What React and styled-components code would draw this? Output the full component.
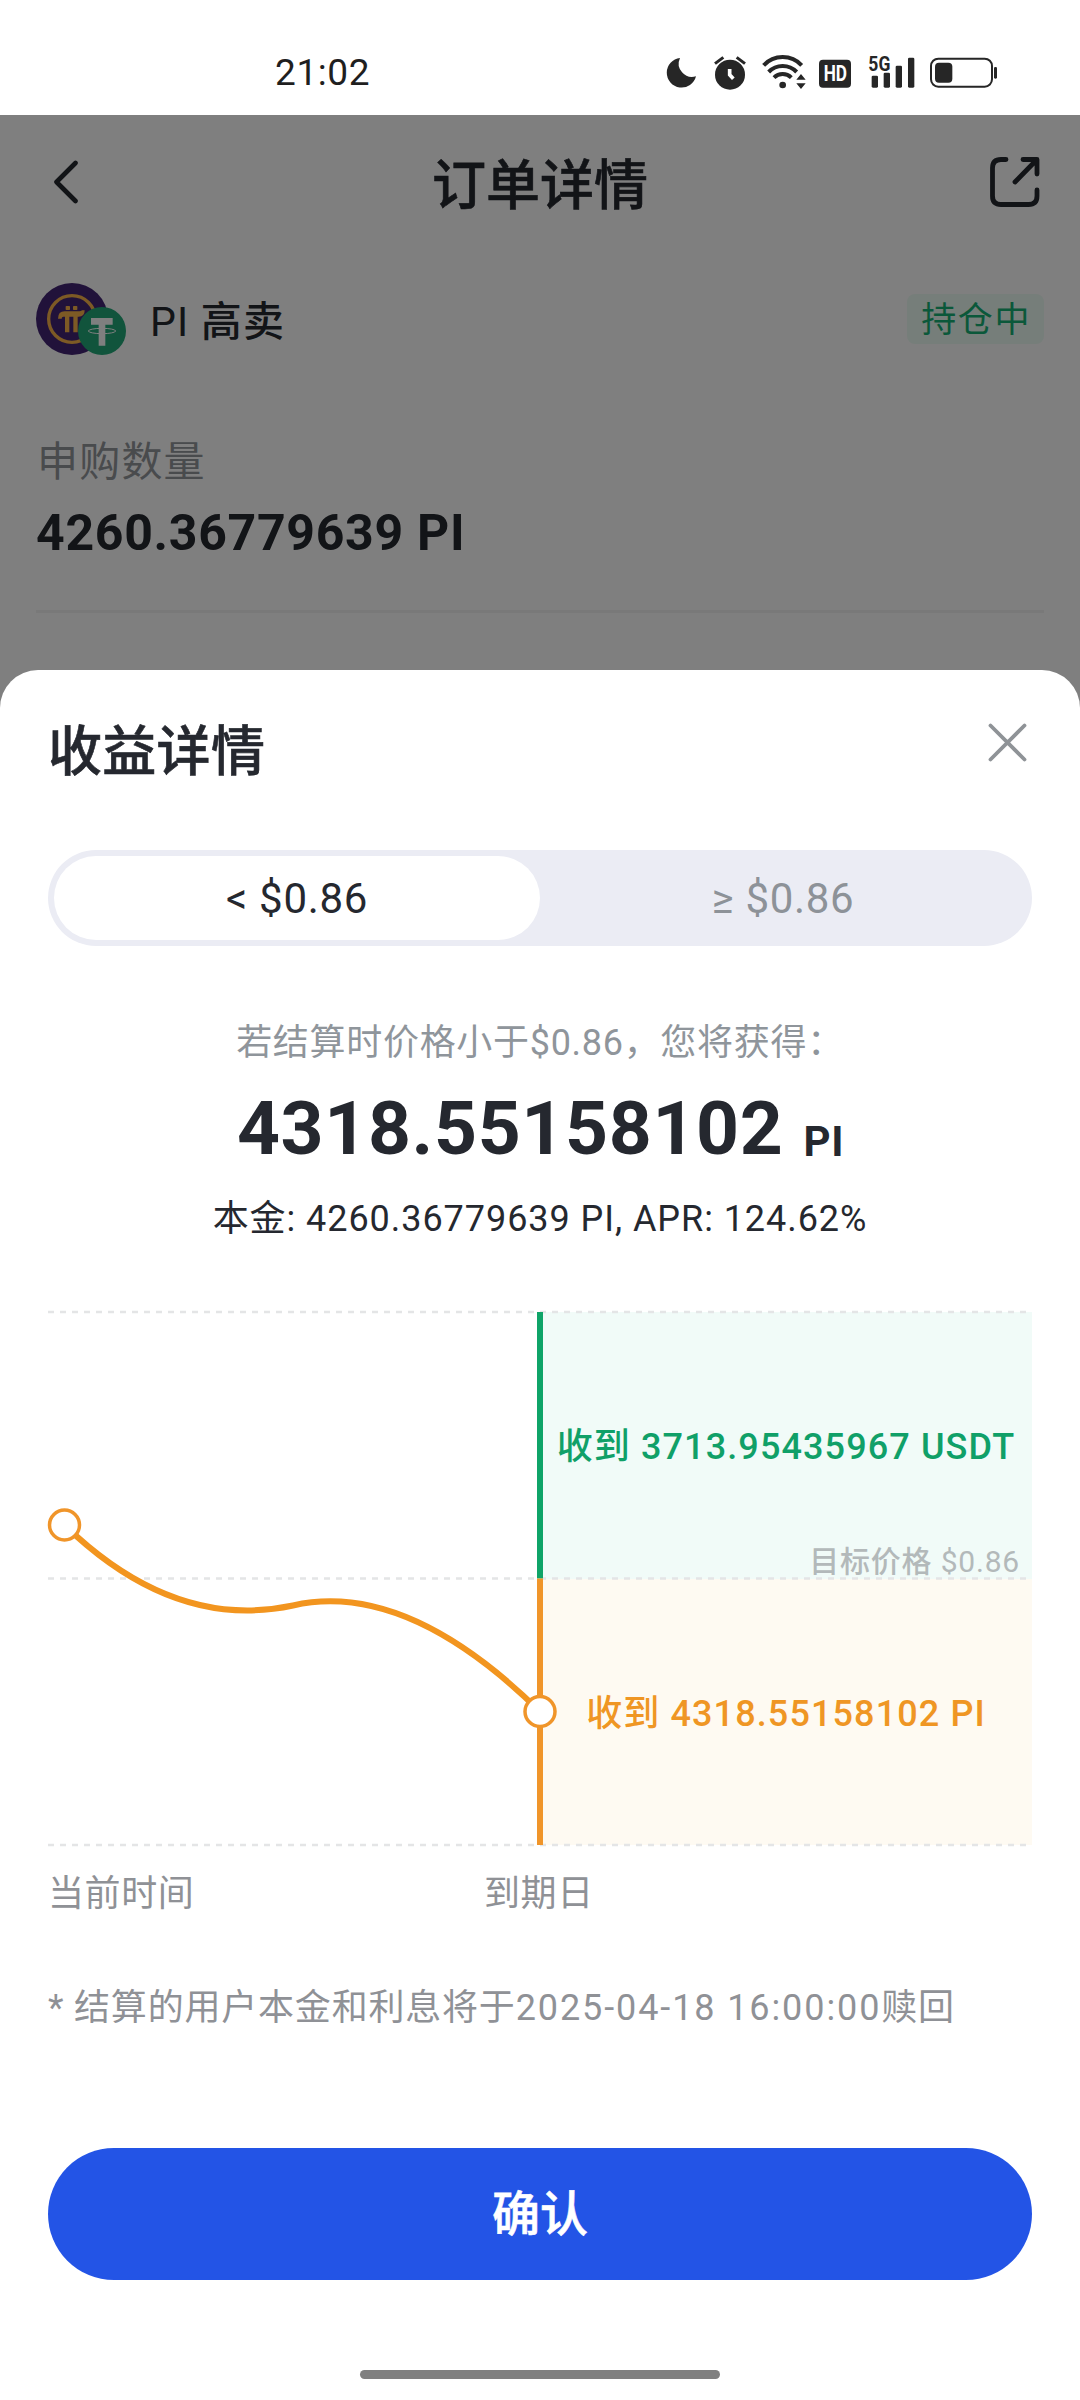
import styled, { createGlobalStyle } from "styled-components";
import { useState } from "react";

const GlobalStyle = createGlobalStyle`
  * {
    box-sizing: border-box;
  }

  body {
    margin: 0;
    background-color: white;
    font-family: Roboto, "Noto Sans CJK SC", sans-serif;
    color: #25282f;
  }

  svg {
    display: block;
  }
`;

const Screen = styled.div`
  width: 1080px;
  height: 2400px;
  position: relative;
  overflow: hidden;
`;

const StatusBar = styled.div`
  display: flex;
  justify-content: space-between;
  align-items: center;
  height: 115px;
  padding: 28px 83px 0 275px;
`;

const Clock = styled.span`
  font-size: 37px;
  font-weight: 450;
  line-height: 44px;
  letter-spacing: 0.6px;
  padding-top: 3px;
  color: #1f1f1f;
`;

const StatusIcons = styled.div`
  display: flex;
`;

const StatusIcon = styled.svg`
  height: 36px;
  margin-left: ${(p) => p.$gap || 0}px;
  overflow: visible;
  fill: #262626;
`;
// 상태바

const Page = styled.div`
  height: 2285px;
  position: relative;
`;

const Header = styled.div`
  display: grid;
  grid-template-columns: 1fr auto 1fr;
  align-items: center;
  height: 134px;
  padding: 0 39px 0 52px;

  svg:last-child {
    justify-self: end;
  }
`;

const HeaderTitle = styled.h1`
  margin: 0;
  padding: 9px 13px 0 0;
  font-size: 54px;
  font-weight: 500;
  line-height: 72px;
  -webkit-text-stroke: 0.6px;
`;

const OrderBox = styled.div`
  padding: 34px 36px 0;
`;

const PairRow = styled.div`
  display: flex;
  align-items: center;
  height: 72px;
`;

const PairName = styled.span`
  margin-left: 24px;
  padding-top: 6px;
  font-size: 41px;
  font-weight: 450;
  letter-spacing: 1.2px;
  line-height: 50px;
`;

const Badge = styled.span`
  margin-left: auto;
  padding: 2px 13px 0 14px;
  height: 50px;
  border-radius: 8px;
  font-size: 35px;
  line-height: 50px;
  letter-spacing: 1.6px;
  color: #16b075;
  background-color: #edfcf4;
`;

const FieldLabel = styled.div`
  margin: 82px 0 0 1px;
  font-size: 41px;
  line-height: 50px;
  letter-spacing: 1.2px;
  color: #92969b;
`;

const FieldValue = styled.div`
  margin-top: 16px;
  padding-bottom: 47px;
  font-size: 50px;
  font-weight: 700;
  line-height: 60px;
  letter-spacing: 0.7px;
  border-bottom: 3px solid #f3f3f3;
`;

const Dim = styled.div`
  position: absolute;
  inset: 0;
  background-color: rgba(0, 0, 0, 0.5);
`;
// 뒤에 깔린 주문 화면

const Sheet = styled.div`
  position: absolute;
  left: 0;
  right: 0;
  bottom: 0;
  height: 1730px;
  padding: 47px 48px 0;
  display: flex;
  flex-direction: column;
  background-color: white;
  border-radius: 38px 38px 0 0;
`;

const SheetTop = styled.div`
  display: flex;
  justify-content: space-between;
  height: 71px;
  padding-right: 5px;
`;

const SheetTitle = styled.h2`
  margin: 0;
  font-size: 54px;
  font-weight: 500;
  line-height: 72px;
  letter-spacing: 0.3px;
  -webkit-text-stroke: 0.6px;
`;

const CloseBtn = styled.button`
  border: none;
  padding: 0;
  height: 50px;
  background: none;

  &:hover {
    cursor: pointer;
  }
`;

const Segment = styled.div`
  display: flex;
  height: 96px;
  margin-top: 62px;
  padding: 6px;
  border-radius: 48px;
  background-color: #ebecf4;
`;

const SegmentBtn = styled.button`
  flex: 1;
  border: none;
  padding: 0;
  border-radius: 42px;
  font-family: inherit;
  font-size: 42px;
  font-weight: 450;
  letter-spacing: 0.7px;
  color: ${(p) => (p.$active ? "#25282f" : "#8d9298")};
  background-color: ${(p) => (p.$active ? "white" : "transparent")};

  &:hover {
    cursor: pointer;
  }
`;
// 가격 조건 탭

const Hint = styled.div`
  margin-top: 72px;
  font-size: 36px;
  line-height: 50px;
  letter-spacing: 0.7px;
  text-align: center;
  color: #8f959b;
`;

const Amount = styled.div`
  display: flex;
  justify-content: center;
  align-items: flex-end;
  margin-top: 15px;
  padding-left: 1px;
  font-size: 75px;
  font-weight: 700;
  line-height: 90px;
  letter-spacing: 0.65px;
`;

const Unit = styled.span`
  margin-left: 20px;
  font-size: 42px;
  line-height: 63px;
`;

const Principal = styled.div`
  margin-top: 21px;
  font-size: 36px;
  line-height: 50px;
  letter-spacing: 0.95px;
  text-align: center;
`;

const Chart = styled.div`
  position: relative;
  display: flex;
  flex-direction: column;
  height: 533px;
  margin-top: 68px;
`;

const Zone = styled.div`
  flex: 1;
  display: flex;
  justify-content: center;
  align-items: center;
  position: relative;
  margin-left: 492px;
  padding-bottom: 4px;
  font-size: 36px;
  font-weight: 500;
  letter-spacing: 1.1px;
  color: ${(p) => p.$color};
  background-color: ${(p) => p.$bg};
`;

const TargetPrice = styled.span`
  position: absolute;
  right: 12px;
  bottom: 0;
  font-size: 30px;
  font-weight: 450;
  line-height: 34px;
  letter-spacing: 0.8px;
  color: #b3b9ba;
`;

const ChartLines = styled.svg`
  position: absolute;
  left: 0;
  top: 0;
  overflow: visible;
`;

const Axis = styled.div`
  display: grid;
  grid-template-columns: 436px 1fr;
  margin-top: 24px;
  font-size: 36px;
  line-height: 50px;
  letter-spacing: 0.6px;
  color: #8f9196;
`;

const Note = styled.div`
  margin-top: 64px;
  font-size: 36px;
  line-height: 50px;
  letter-spacing: 0.8px;
  white-space: nowrap;
  color: #8f9196;
`;

const NoteTime = styled.span`
  letter-spacing: 1.9px;
`;

const ConfirmBtn = styled.button`
  flex-shrink: 0;
  height: 132px;
  margin-top: 115px;
  padding-bottom: 9px;
  border: none;
  border-radius: 66px;
  font-family: inherit;
  font-size: 48px;
  font-weight: 500;
  color: white;
  background-color: #2354e6;
  -webkit-text-stroke: 0.6px;

  &:hover {
    cursor: pointer;
  }
`;

const HomeBar = styled.div`
  flex-shrink: 0;
  align-self: center;
  width: 360px;
  height: 9px;
  margin-top: 90px;
  border-radius: 5px;
  background-color: #808080;
`;

function Status() {
  return (
    <StatusBar>
      <Clock>21:02</Clock>
      <StatusIcons>
        <StatusIcon width="29" viewBox="81 70 87 108">
          <path d="M120 82 A44.500 44.500 0 1 0 168 137 A40 40 0 0 1 120 82 Z" />
        </StatusIcon>
        <StatusIcon $gap={18} width="32" viewBox="222 70 96 108">
          <circle cx="270" cy="132" r="45" />
          <path
            d="M225 99 L250 80 M315 99 L290 80"
            stroke="#262626"
            strokeWidth="9"
          />
          <path
            d="M269 115 V132 L280 144"
            fill="none"
            stroke="white"
            strokeWidth="11"
          />
        </StatusIcon>
        <StatusIcon $gap={16} width="44.667" viewBox="366 70 134 108">
          <g fill="none" stroke="#262626" strokeWidth="12">
            <path d="M371 104 A78 78 0 0 1 485 104" />
            <path d="M386 124 A58 58 0 0 1 470 124" />
            <path d="M402 141 A37 37 0 0 1 454 141" />
          </g>
          <circle cx="428" cy="163" r="10" />
          <path d="M483 130 L497 147 H469 Z M483 175 L497 158 H469 Z" />
        </StatusIcon>
        <StatusIcon $gap={12} width="32" viewBox="537 70 96 108">
          <rect x="537" y="87" width="96" height="84" rx="12" />
          <text
            x="551"
            y="152"
            fill="white"
            fontSize="65"
            fontWeight="700"
            textLength="70"
            lengthAdjust="spacingAndGlyphs"
          >
            HD
          </text>
        </StatusIcon>
        <StatusIcon $gap={17} width="46.333" viewBox="683 70 139 108">
          <text
            x="684"
            y="121"
            fontSize="62"
            fontWeight="700"
            textLength="66"
            lengthAdjust="spacingAndGlyphs"
          >
            5G
          </text>
          <rect x="694" y="135" width="19" height="36" rx="4" />
          <rect x="730" y="126" width="19" height="45" rx="4" />
          <rect x="766" y="105" width="19" height="66" rx="4" />
          <rect x="803" y="81" width="19" height="90" rx="4" />
        </StatusIcon>
        <StatusIcon $gap={16} width="67" viewBox="870 70 201 108">
          <rect
            x="873"
            y="84"
            width="183"
            height="84"
            rx="22"
            fill="none"
            stroke="#262626"
            strokeWidth="6"
          />
          <rect x="885" y="96" width="52" height="60" rx="12" />
          <rect x="1062" y="109" width="9" height="35" rx="4" />
        </StatusIcon>
      </StatusIcons>
    </StatusBar>
  );
}

function CoinLogo() {
  return (
    <svg width="90" height="72" viewBox="18 24 270 216">
      <circle cx="126" cy="132" r="108" fill="#432574" />
      <g fill="#fbb44a">
        <circle
          cx="126"
          cy="132"
          r="70"
          fill="none"
          stroke="#fbb44a"
          strokeWidth="10"
        />
        <rect x="107" y="93" width="13" height="12" rx="2" />
        <rect x="129" y="93" width="13" height="12" rx="2" />
        <path d="M84 131 Q84 109 104 109 H148 Q154 109 156 106 H164 Q164 125 146 125 H143 V172 H130 V125 H118 V172 H105 V125 H100 Q95 125 95 131 Z" />
      </g>
      <circle cx="216" cy="168" r="72" fill="#22a878" />
      <path d="M183 129 H248 V149 H226 V212 H206 V149 H183 Z" fill="white" />
      <ellipse
        cx="216"
        cy="168"
        rx="41"
        ry="8"
        fill="none"
        stroke="white"
        strokeWidth="3"
      />
    </svg>
  );
}
// 코인 로고 (PI + USDT)

function PriceChart() {
  return (
    <Chart>
      <Zone $color="#10a068" $bg="#f1fbf8">
        收到 3713.95435967 USDT
        <TargetPrice>目标价格 $0.86</TargetPrice>
      </Zone>
      <Zone $color="#ef9624" $bg="#fefaf2">
        收到 4318.55158102 PI
      </Zone>
      <ChartLines width="984" height="533" fill="none">
        <path
          d="M0 0 H984 M0 266.500 H984 M0 533 H984"
          stroke="#e4e5e6"
          strokeWidth="2.500"
          strokeDasharray="6 6"
        />
        <path d="M492 0 V266.500" stroke="#0fa468" strokeWidth="6" />
        <path d="M492 266.500 V533" stroke="#f0952a" strokeWidth="6" />
        <path
          d="M16.500 213 Q126 319 245 293.500 Q358 268 492 399.500"
          stroke="#f2951f"
          strokeWidth="6"
        />
        <circle
          cx="16.500"
          cy="213"
          r="15"
          fill="white"
          stroke="#f0952a"
          strokeWidth="3.500"
        />
        <circle
          cx="492"
          cy="399.500"
          r="15"
          fill="white"
          stroke="#f0952a"
          strokeWidth="3.500"
        />
      </ChartLines>
    </Chart>
  );
}

function App() {
  const tabs = ["< $0.86", "≥ $0.86"];
  const [tab, setTab] = useState(0);

  return (
    <Screen>
      <GlobalStyle />
      <Status />

      <Page>
        <Header>
          <svg width="28" height="44" viewBox="0 0 28 44">
            <path
              d="M23.500 3 L4.500 22 L23.500 41"
              fill="none"
              stroke="#25282f"
              strokeWidth="4.600"
              strokeLinecap="round"
              strokeLinejoin="round"
            />
          </svg>
          <HeaderTitle>订单详情</HeaderTitle>
          <svg width="52" height="52" viewBox="0 0 52 52">
            <path
              d="M17 3.500 H12 Q3.500 3.500 3.500 12 V40 Q3.500 48.500 12 48.500 H39.500 Q48 48.500 48 40 V34 M34 3.500 H48 V18 M47.500 4 L26 26"
              fill="none"
              stroke="#25282f"
              strokeWidth="4.800"
              strokeLinecap="round"
              strokeLinejoin="round"
            />
          </svg>
        </Header>

        <OrderBox>
          <PairRow>
            <CoinLogo />
            <PairName>PI 高卖</PairName>
            <Badge>持仓中</Badge>
          </PairRow>
          <FieldLabel>申购数量</FieldLabel>
          <FieldValue>4260.36779639 PI</FieldValue>
        </OrderBox>
        <Dim />
      </Page>

      <Sheet>
        <SheetTop>
          <SheetTitle>收益详情</SheetTitle>
          <CloseBtn>
            <svg width="39" height="39" viewBox="0 0 39 39">
              <path
                d="M2.500 2.500 L36.500 36.500 M36.500 2.500 L2.500 36.500"
                stroke="#8f9397"
                strokeWidth="3.800"
                strokeLinecap="round"
              />
            </svg>
          </CloseBtn>
        </SheetTop>

        <Segment>
          {tabs.map((label, index) => (
            <SegmentBtn
              key={label}
              $active={tab === index}
              onClick={() => setTab(index)}
            >
              {label}
            </SegmentBtn>
          ))}
        </Segment>

        <Hint>若结算时价格小于$0.86，您将获得：</Hint>
        <Amount>
          4318.55158102
          <Unit>PI</Unit>
        </Amount>
        <Principal>本金: 4260.36779639 PI, APR: 124.62%</Principal>

        <PriceChart />

        <Axis>
          <span>当前时间</span>
          <span>到期日</span>
        </Axis>
        <Note>
          * 结算的用户本金和利息将于<NoteTime>2025-04-18 16:00:00</NoteTime>赎回
        </Note>

        <ConfirmBtn>确认</ConfirmBtn>
        <HomeBar />
      </Sheet>
    </Screen>
  );
}

export default App;
